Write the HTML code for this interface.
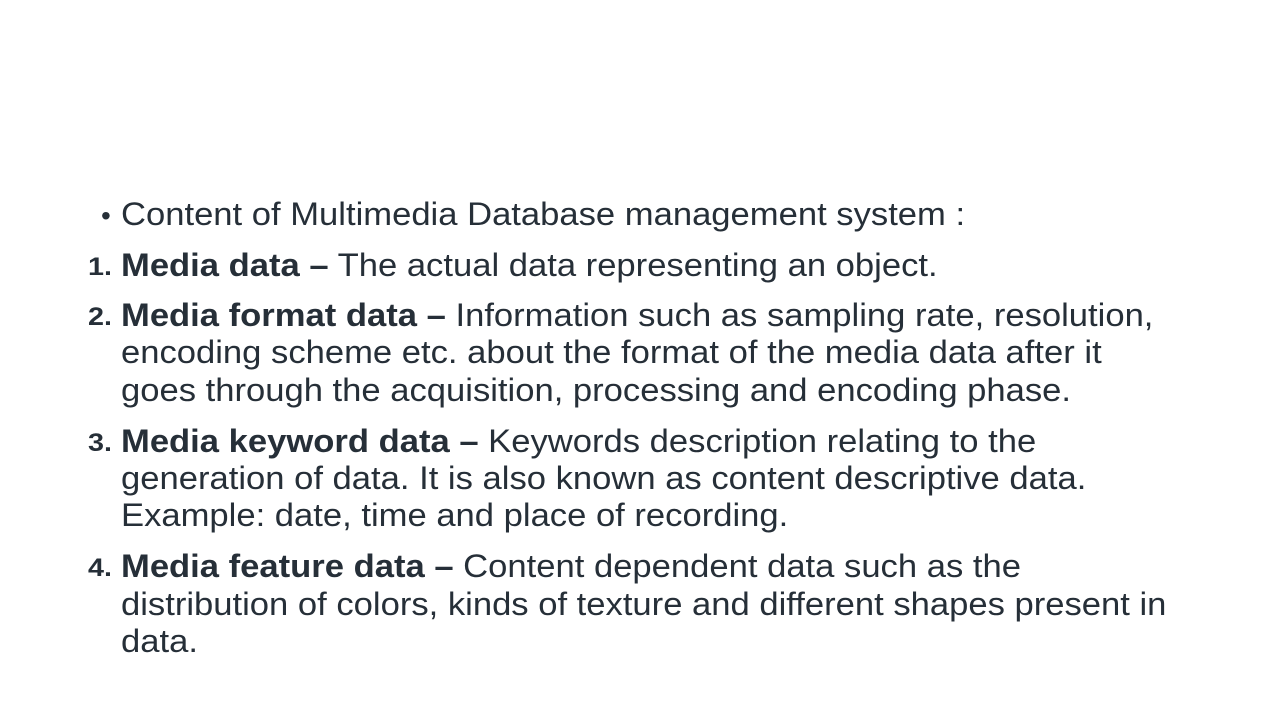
<!DOCTYPE html>
<html><head><meta charset="utf-8"><style>
html,body{margin:0;padding:0;background:#fff;}
body{width:1280px;height:720px;position:relative;overflow:hidden;font-family:"Liberation Sans",Arial,sans-serif;color:#262f38;}
.l{position:absolute;left:121px;font-size:32px;line-height:37.5px;white-space:nowrap;transform:scaleX(1.081);transform-origin:0 0;}
.n{position:absolute;left:88px;font-size:25px;font-weight:bold;line-height:37.5px;white-space:nowrap;transform:scaleX(1.15);transform-origin:0 0;}
.b{position:absolute;left:101px;font-size:28px;line-height:37.5px;}
b{font-weight:bold;}
</style></head><body>
<div class="b" style="top:197px">•</div>
<div class="l" style="top:196px">Content of Multimedia Database management system :</div>

<div class="n" style="top:249px">1.</div>
<div class="l" style="top:247px"><b>Media data –</b> The actual data representing an object.</div>

<div class="n" style="top:299px">2.</div>
<div class="l" style="top:297px"><b>Media format data –</b> Information such as sampling rate, resolution,</div>
<div class="l" style="top:334px">encoding scheme etc. about the format of the media data after it</div>
<div class="l" style="top:372px">goes through the acquisition, processing and encoding phase.</div>

<div class="n" style="top:425px">3.</div>
<div class="l" style="top:423px"><b>Media keyword data –</b> Keywords description relating to the</div>
<div class="l" style="top:460px">generation of data. It is also known as content descriptive data.</div>
<div class="l" style="top:497px">Example: date, time and place of recording.</div>

<div class="n" style="top:550px">4.</div>
<div class="l" style="top:548px"><b>Media feature data –</b> Content dependent data such as the</div>
<div class="l" style="top:586px">distribution of colors, kinds of texture and different shapes present in</div>
<div class="l" style="top:623px">data.</div>
</body></html>
